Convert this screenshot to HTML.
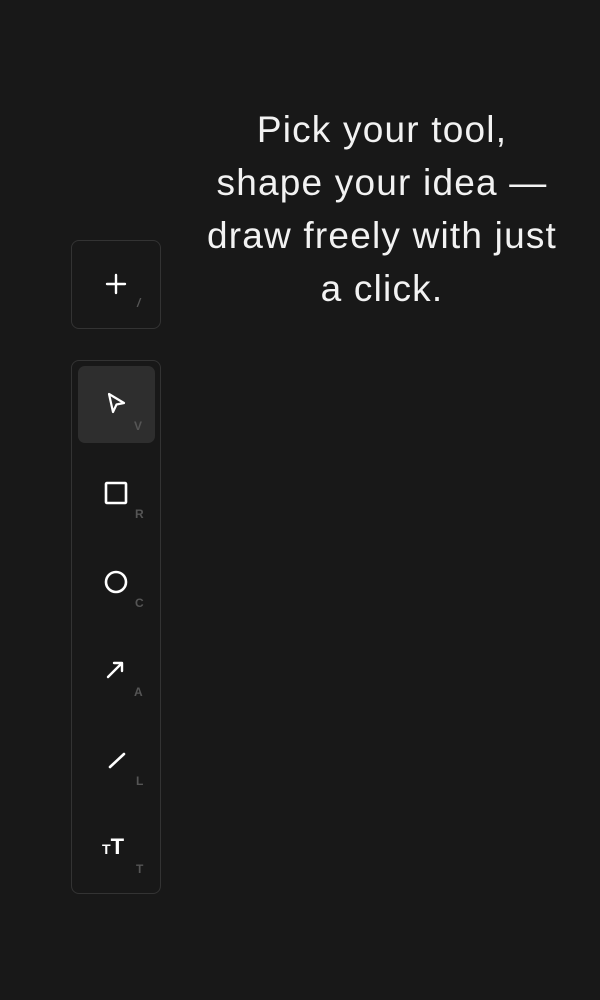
<!DOCTYPE html>
<html><head><style>
body{margin:0;width:600px;height:1000px;background:#181818;position:relative;overflow:hidden;font-family:"Liberation Sans",sans-serif}
.box{position:absolute;left:71px;width:90px;border:1.5px solid #333;border-radius:8px;box-sizing:border-box}
.k{position:absolute;color:#555;font-size:12px;font-weight:bold}
svg{position:absolute}
.t{position:absolute;left:170px;width:424px;top:103px;text-align:center;color:#f2f2f2;font-size:37px;line-height:53px;letter-spacing:1.2px;word-spacing:0px}
</style></head><body>
<div class="box" style="top:240px;height:89px"></div>
<svg style="left:104px;top:272px" width="24" height="24"><path d="M12 3V21M3 12H21" stroke="#fff" stroke-width="2.4" stroke-linecap="round"/></svg>
<div class="k" style="left:137px;top:296px;font-style:italic">/</div>

<div class="box" style="top:360px;height:534px"></div>
<div style="position:absolute;left:78px;top:366px;width:77px;height:77px;background:#2e2e2e;border-radius:7px"></div>
<svg style="left:104px;top:391px" width="24" height="24"><path d="M5 3L20 12L12.5 13.5L9 21Z" stroke="#fff" stroke-width="2.2" fill="none" stroke-linejoin="round"/></svg>
<div class="k" style="left:134px;top:419px">V</div>

<svg style="left:104px;top:481px" width="24" height="24"><rect x="2" y="2" width="20" height="20" rx="1" stroke="#fff" stroke-width="2.6" fill="none"/></svg>
<div class="k" style="left:135px;top:507px">R</div>

<svg style="left:104px;top:570px" width="24" height="24"><circle cx="12" cy="12" r="10" stroke="#fff" stroke-width="2.6" fill="none"/></svg>
<div class="k" style="left:135px;top:596px">C</div>

<svg style="left:104px;top:659px" width="24" height="24"><path d="M4 18L18 4M10 4H18V12" stroke="#fff" stroke-width="2.4" fill="none" stroke-linecap="round" stroke-linejoin="round"/></svg>
<div class="k" style="left:134px;top:685px">A</div>

<svg style="left:104px;top:748px" width="24" height="24"><path d="M6 19L20 6" stroke="#fff" stroke-width="2.6" stroke-linecap="round"/></svg>
<div class="k" style="left:136px;top:774px">L</div>

<div style="position:absolute;left:102px;top:835px;color:#fff;font-weight:bold;line-height:24px"><span style="font-size:14px">T</span><span style="font-size:22px">T</span></div>
<div class="k" style="left:136px;top:862px">T</div>

<div class="t">Pick your tool,<br>shape your idea —<br>draw freely with just<br>a click.</div>
</body></html>
